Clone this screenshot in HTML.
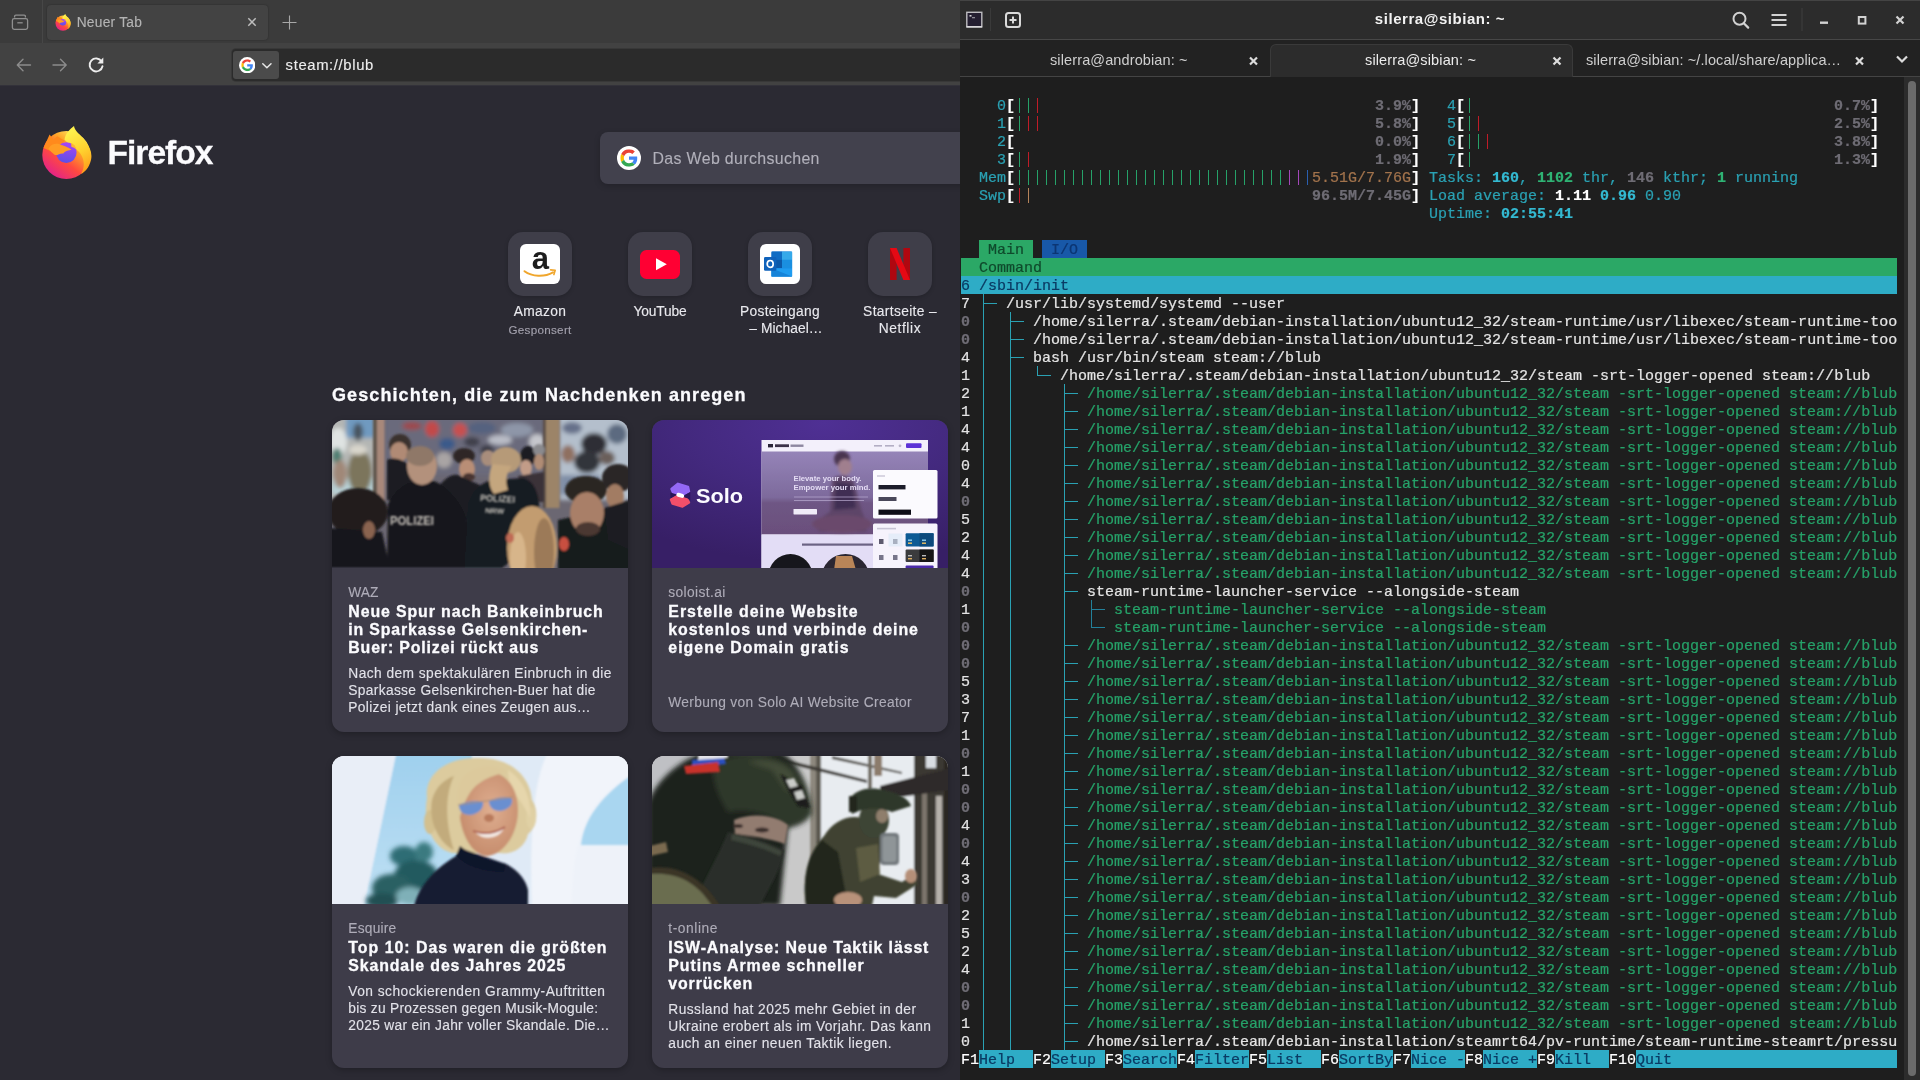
<!DOCTYPE html>
<html lang="de"><head><meta charset="utf-8"><title>screen</title>
<style>
*{box-sizing:border-box}
html,body{margin:0;padding:0}
body{width:1920px;height:1080px;overflow:hidden;position:relative;background:#2b2a33;font-family:"Liberation Sans",sans-serif}
#ff{will-change:transform;position:absolute;left:0;top:0;width:960px;height:1080px;overflow:hidden;background:#2b2a33}
#tm{will-change:transform;position:absolute;left:960px;top:0;width:960px;height:1080px;overflow:hidden;background:#1e1e1e}
#tg{position:absolute;left:-960px;top:0;width:1920px;height:1080px}
.t{position:absolute;font-family:"Liberation Mono",monospace;font-size:15px;line-height:18px;height:18px;white-space:pre;margin-top:2px;-webkit-text-stroke:0.22px}
.r{position:absolute}
.a{position:absolute}
.s{position:absolute;white-space:nowrap;font-family:"Liberation Sans",sans-serif}
</style></head><body>
<div id="ff">
<div class="a" style="left:0;top:0;width:960px;height:44px;background:#3b3b3b"></div>
<div class="a" style="left:0;top:43px;width:960px;height:43px;background:#424242"></div>
<div class="a" style="left:0;top:85px;width:960px;height:1px;background:#33323a"></div>
<div class="a" style="left:42px;top:0;width:1px;height:43px;background:#474747"></div>
<div class="a" style="left:47px;top:5px;width:221px;height:35px;background:#434343;border-radius:4px;box-shadow:0 0 2px rgba(0,0,0,.35)"></div>
<div class="a" style="left:232px;top:49px;width:740px;height:32px;background:#2b2b2b;border-radius:4px;box-shadow:0 0 0 1px #383838"></div>
<div class="a" style="left:233px;top:51px;width:46px;height:28px;background:#4b4b4b;border-radius:3px"></div>
<svg class="a" style="left:0;top:0" width="400" height="86" viewBox="0 0 400 86" fill="none">
<g stroke="#8f8f8f" stroke-width="1.3"><path d="M14.6 17.6v-1.3a1.2 1.2 0 0 1 1.2-1.2h8.4a1.2 1.2 0 0 1 1.2 1.2v1.3"/><rect x="12.4" y="18.6" width="15.2" height="10.8" rx="1.8"/><path d="M17.3 22.8h5.4"/></g>
<g stroke="#8c8c8c" stroke-width="1.4" stroke-linecap="round" stroke-linejoin="round"><path d="M30.5 65H17.5M23 59.3L17.3 65l5.7 5.7"/><path d="M53 65h13M60.5 59.3l5.7 5.7-5.7 5.7"/></g>
<g stroke="#ededed" stroke-width="1.9" stroke-linecap="round"><path d="M101.6 61.4A6.5 6.5 0 1 0 102.5 66.2"/></g><path d="M103.3 57.6v5.9h-5.9z" fill="#ededed"/>
<path d="M248.3 18.3l7.4 7.4M255.7 18.3l-7.4 7.4" stroke="#bdbdbd" stroke-width="1.5"/>
<path d="M289.5 15.5v14M282.5 22.5h14" stroke="#a8a8a8" stroke-width="1.1"/>
<path d="M262.8 63.8l4.1 4 4.1-4" stroke="#e8e8e8" stroke-width="1.5" stroke-linecap="round" stroke-linejoin="round"/>
</svg>
<svg class="a" style="left:55px;top:14px" width="16" height="16.8" viewBox="0 0 51 53.5"><defs>
<linearGradient id="fxA" x1="0.85" y1="0.1" x2="0.2" y2="0.95"><stop offset="0" stop-color="#fff36a"/><stop offset="0.3" stop-color="#ffa428"/><stop offset="0.62" stop-color="#ff4a3f"/><stop offset="1" stop-color="#e2208c"/></linearGradient>
<linearGradient id="fxB" x1="0.4" y1="0" x2="0.7" y2="1"><stop offset="0" stop-color="#fff44f"/><stop offset="0.55" stop-color="#ffd02e"/><stop offset="1" stop-color="#ff9a1a"/></linearGradient>
<linearGradient id="fxC" x1="0.6" y1="0" x2="0.4" y2="1"><stop offset="0" stop-color="#a845f5"/><stop offset="1" stop-color="#5b4fe6"/></linearGradient>
</defs>
<circle cx="25.3" cy="29" r="24" fill="url(#fxA)"/>
<path d="M2.5 22 L8.6 8.4 L12.3 13.4 L16.2 10.2 L24 15 L12 26Z" fill="#ff8a1c"/>
<path d="M23.5 13.5 C24.5 7 29 3 33 0 C33.5 5 39.5 8.5 44 14.5 C49 21 51.5 27 50 34 C48 42 44 46 40 48 C45 40 43 30 36.5 24.5 C33 21 27.5 18.5 23.5 13.5Z" fill="url(#fxB)"/>
<circle cx="25.3" cy="26.6" r="10.3" fill="url(#fxC)"/>
<path d="M7.5 22.5 C11 16.5 17 17.5 20.5 19 C23.5 20 27 21 30.5 23.5 C27.5 24.8 24.5 24.5 22.3 27.6 C19 26.6 15.8 30.6 13.2 28.4 C11 26.6 9 25 7.5 22.5Z" fill="#ff9d24"/>
<path d="M30 17 C33 18 35 21 35.6 24 C34 22 32 21 30.5 21Z" fill="#ffb52e"/></svg>
<svg class="a" style="left:238.8px;top:56.8px" width="16.4" height="16.4" viewBox="0 0 16.4 16.4"><circle cx="8.2" cy="8.2" r="8.2" fill="#fff"/><svg x="2.255" y="2.255" width="11.889999999999999" height="11.889999999999999" viewBox="0 0 48 48"><path fill="#EA4335" d="M24 9.5c3.54 0 6.71 1.22 9.21 3.6l6.85-6.85C35.9 2.38 30.47 0 24 0 14.62 0 6.51 5.38 2.56 13.22l7.98 6.19C12.43 13.72 17.74 9.5 24 9.5z"/><path fill="#4285F4" d="M46.98 24.55c0-1.57-.15-3.09-.38-4.55H24v9.02h12.94c-.58 2.96-2.26 5.48-4.78 7.18l7.73 6c4.51-4.18 7.09-10.36 7.09-17.65z"/><path fill="#FBBC05" d="M10.53 28.59c-.48-1.45-.76-2.99-.76-4.59s.27-3.14.76-4.59l-7.98-6.19C.92 16.46 0 20.12 0 24c0 3.88.92 7.54 2.56 10.78l7.97-6.19z"/><path fill="#34A853" d="M24 48c6.48 0 11.93-2.13 15.89-5.81l-7.73-6c-2.15 1.45-4.92 2.3-8.16 2.3-6.26 0-11.57-4.22-13.47-9.91l-7.98 6.19C6.51 42.62 14.62 48 24 48z"/></svg></svg>
<svg class="a" style="left:40.5px;top:125.5px" width="51" height="53.5" viewBox="0 0 51 53.5"><defs>
<linearGradient id="fyA" x1="0.85" y1="0.1" x2="0.2" y2="0.95"><stop offset="0" stop-color="#fff36a"/><stop offset="0.3" stop-color="#ffa428"/><stop offset="0.62" stop-color="#ff4a3f"/><stop offset="1" stop-color="#e2208c"/></linearGradient>
<linearGradient id="fyB" x1="0.4" y1="0" x2="0.7" y2="1"><stop offset="0" stop-color="#fff44f"/><stop offset="0.55" stop-color="#ffd02e"/><stop offset="1" stop-color="#ff9a1a"/></linearGradient>
<linearGradient id="fyC" x1="0.6" y1="0" x2="0.4" y2="1"><stop offset="0" stop-color="#a845f5"/><stop offset="1" stop-color="#5b4fe6"/></linearGradient>
</defs>
<circle cx="25.3" cy="29" r="24" fill="url(#fyA)"/>
<path d="M2.5 22 L8.6 8.4 L12.3 13.4 L16.2 10.2 L24 15 L12 26Z" fill="#ff8a1c"/>
<path d="M23.5 13.5 C24.5 7 29 3 33 0 C33.5 5 39.5 8.5 44 14.5 C49 21 51.5 27 50 34 C48 42 44 46 40 48 C45 40 43 30 36.5 24.5 C33 21 27.5 18.5 23.5 13.5Z" fill="url(#fyB)"/>
<circle cx="25.3" cy="26.6" r="10.3" fill="url(#fyC)"/>
<path d="M7.5 22.5 C11 16.5 17 17.5 20.5 19 C23.5 20 27 21 30.5 23.5 C27.5 24.8 24.5 24.5 22.3 27.6 C19 26.6 15.8 30.6 13.2 28.4 C11 26.6 9 25 7.5 22.5Z" fill="#ff9d24"/>
<path d="M30 17 C33 18 35 21 35.6 24 C34 22 32 21 30.5 21Z" fill="#ffb52e"/></svg>
<div class="a" style="left:600px;top:132px;width:380px;height:52px;background:#42414d;border-radius:8px;box-shadow:0 2px 6px rgba(0,0,0,.2)"></div>
<svg class="a" style="left:617px;top:146px" width="24" height="24" viewBox="0 0 24 24"><circle cx="12" cy="12" r="12" fill="#fff"/><svg x="3.3000000000000007" y="3.3000000000000007" width="17.4" height="17.4" viewBox="0 0 48 48"><path fill="#EA4335" d="M24 9.5c3.54 0 6.71 1.22 9.21 3.6l6.85-6.85C35.9 2.38 30.47 0 24 0 14.62 0 6.51 5.38 2.56 13.22l7.98 6.19C12.43 13.72 17.74 9.5 24 9.5z"/><path fill="#4285F4" d="M46.98 24.55c0-1.57-.15-3.09-.38-4.55H24v9.02h12.94c-.58 2.96-2.26 5.48-4.78 7.18l7.73 6c4.51-4.18 7.09-10.36 7.09-17.65z"/><path fill="#FBBC05" d="M10.53 28.59c-.48-1.45-.76-2.99-.76-4.59s.27-3.14.76-4.59l-7.98-6.19C.92 16.46 0 20.12 0 24c0 3.88.92 7.54 2.56 10.78l7.97-6.19z"/><path fill="#34A853" d="M24 48c6.48 0 11.93-2.13 15.89-5.81l-7.73-6c-2.15 1.45-4.92 2.3-8.16 2.3-6.26 0-11.57-4.22-13.47-9.91l-7.98 6.19C6.51 42.62 14.62 48 24 48z"/></svg></svg>
<div class="a" style="left:508px;top:232px;width:64px;height:64px;background:#3f3e49;border-radius:15px;box-shadow:0 1px 4px rgba(0,0,0,.2)"></div>
<div class="a" style="left:628px;top:232px;width:64px;height:64px;background:#3f3e49;border-radius:15px;box-shadow:0 1px 4px rgba(0,0,0,.2)"></div>
<div class="a" style="left:748px;top:232px;width:64px;height:64px;background:#3f3e49;border-radius:15px;box-shadow:0 1px 4px rgba(0,0,0,.2)"></div>
<div class="a" style="left:868px;top:232px;width:64px;height:64px;background:#3f3e49;border-radius:15px;box-shadow:0 1px 4px rgba(0,0,0,.2)"></div>
<div class="a" style="left:520px;top:244px;width:40px;height:40px;background:#fff;border-radius:6px"></div>
<svg class="a" style="left:520px;top:244px" width="40" height="40" viewBox="0 0 40 40"><text x="20.3" y="25.2" text-anchor="middle" font-family="Liberation Sans" font-weight="bold" font-size="31" fill="#1d1d1d">a</text>
<path d="M4.5 27.2C12 32.8 24.5 33.2 33 28.3" stroke="#f0a62c" stroke-width="2" fill="none" stroke-linecap="round"/><path d="M30.6 25.9l4.6.4-1.3 4.3" stroke="#f0a62c" stroke-width="1.6" fill="none" stroke-linecap="round" stroke-linejoin="round"/></svg>
<div class="a" style="left:640px;top:250px;width:40px;height:28.5px;background:#ff0033;border-radius:6.5px"></div>
<svg class="a" style="left:640px;top:250px" width="40" height="29" viewBox="0 0 40 29"><path d="M16 8.3v12l10.8-6z" fill="#fff"/></svg>
<div class="a" style="left:760px;top:244px;width:40px;height:40px;background:#fff;border-radius:6px"></div>
<svg class="a" style="left:760px;top:244px" width="40" height="40" viewBox="0 0 40 40">
<rect x="11.5" y="7.6" width="20.6" height="25" rx="1.2" fill="#1373d1"/>
<rect x="22" y="7.6" width="10.1" height="8.3" fill="#35a9ea"/><rect x="11.5" y="7.6" width="10.5" height="8.3" fill="#0f6cc4"/>
<rect x="22" y="15.9" width="10.1" height="8.3" fill="#1a8fe0"/><rect x="11.5" y="15.9" width="10.5" height="8.3" fill="#0c59a9"/>
<rect x="11.5" y="24.2" width="20.6" height="8.4" fill="#1f9cf0"/>
<path d="M11.5 24.2l20.6 8.4H11.5z" fill="#1683d8"/>
<rect x="4" y="13" width="12.4" height="13.8" rx="1.3" fill="#0f62bb"/>
<ellipse cx="10.2" cy="19.9" rx="3" ry="3.4" fill="none" stroke="#fff" stroke-width="1.7"/></svg>
<svg class="a" style="left:890px;top:248px" width="20" height="32" viewBox="0 0 20 32"><rect x="0" y="0" width="6.6" height="32" fill="#b00710"/><rect x="13.4" y="0" width="6.6" height="32" fill="#b00710"/><path d="M0 0h6.6L20 32h-6.6z" fill="#e50914"/></svg>
<div class="a" style="left:332px;top:420px;width:296px;height:312px;background:#3e3c49;border-radius:12px;overflow:hidden;box-shadow:0 2px 6px rgba(0,0,0,.25)"><div style="position:absolute;left:0;top:0;width:296px;height:148px;overflow:hidden"><svg width="296" height="148" viewBox="0 0 296 148" style="display:block"><defs><filter id="b1a" x="-10%" y="-10%" width="120%" height="120%"><feGaussianBlur stdDeviation="2.2"/></filter><filter id="b1b" x="-10%" y="-10%" width="120%" height="120%"><feGaussianBlur stdDeviation="1.1"/></filter></defs>
<rect width="296" height="148" fill="#6b6772"/>
<g filter="url(#b1a)">
<rect x="-5" y="-5" width="52" height="85" fill="#b4b6b4"/>
<rect x="14" y="-4" width="30" height="22" fill="#6f9ac0"/><ellipse cx="26" cy="12" rx="5" ry="9" fill="#4a5560"/>
<ellipse cx="6" cy="22" rx="9" ry="14" fill="#dfe3e2"/><ellipse cx="5" cy="36" rx="5" ry="8" fill="#4f7f72"/>
<rect x="0" y="58" width="44" height="16" fill="#b9d3d8"/>
<ellipse cx="28" cy="52" rx="12" ry="22" fill="#7b745c"/><ellipse cx="8" cy="54" rx="7" ry="14" fill="#a08878"/><ellipse cx="26" cy="30" rx="9" ry="5" fill="#d9d6cc"/>
<rect x="53" y="-5" width="160" height="60" fill="#6a6b7c"/>
<ellipse cx="100" cy="9" rx="7" ry="8" fill="#c24a4a"/><ellipse cx="128" cy="10" rx="7" ry="7" fill="#c85050"/><ellipse cx="80" cy="6" rx="10" ry="4" fill="#9c4a4e"/>
<ellipse cx="150" cy="8" rx="14" ry="6" fill="#55627f"/><ellipse cx="185" cy="10" rx="16" ry="7" fill="#8e96a8"/><ellipse cx="115" cy="24" rx="8" ry="6" fill="#3b5a8a"/>
<ellipse cx="168" cy="20" rx="12" ry="5" fill="#b9bcc6"/><ellipse cx="205" cy="22" rx="8" ry="8" fill="#c5c6cc"/><ellipse cx="140" cy="22" rx="8" ry="5" fill="#41414b"/>
<ellipse cx="112" cy="40" rx="8" ry="8" fill="#a9a4a4"/><ellipse cx="155" cy="30" rx="7" ry="5" fill="#3a3a44"/>
<rect x="227" y="-5" width="75" height="85" fill="#b4bfcc"/>
<ellipse cx="262" cy="24" rx="13" ry="11" fill="#2e2f36"/><ellipse cx="255" cy="42" rx="13" ry="11" fill="#33343b"/><ellipse cx="236" cy="34" rx="7" ry="9" fill="#8f6f60"/>
<ellipse cx="285" cy="14" rx="10" ry="10" fill="#5b6a80"/><ellipse cx="240" cy="8" rx="10" ry="6" fill="#66718a"/><ellipse cx="275" cy="38" rx="8" ry="7" fill="#6a5e5a"/>
<rect x="228" y="55" width="40" height="20" fill="#7f8ea6"/>
</g>
<g filter="url(#b1b)">
<rect x="44.5" y="-2" width="8" height="84" fill="#a8887a"/><rect x="41" y="-2" width="4" height="84" fill="#5e564e"/>
<rect x="213" y="-2" width="14.5" height="90" fill="#9c8468"/><rect x="211" y="-2" width="3" height="90" fill="#5c5048"/>
<!-- officer far left behind -->
<ellipse cx="68" cy="25" rx="11" ry="11" fill="#3b332f"/><ellipse cx="67" cy="32" rx="9" ry="10" fill="#b08a74"/>
<path d="M55 40 C62 36 76 40 82 52 L82 80 L55 80Z" fill="#1d1e24"/>
<!-- man glasses -->
<ellipse cx="132" cy="36" rx="11" ry="8" fill="#2e2827"/><ellipse cx="135" cy="49" rx="8" ry="10" fill="#b98e76"/><ellipse cx="137" cy="57" rx="6" ry="4" fill="#4a3630"/>
<path d="M104 70 C112 58 122 52 128 56 L150 66 L150 100 L104 100Z" fill="#1c1d23"/>
<!-- woman black hat + grey hat man -->
<ellipse cx="196" cy="36" rx="8" ry="10" fill="#1f1f24"/><ellipse cx="194" cy="48" rx="6" ry="8" fill="#c29c88"/>
<ellipse cx="207" cy="30" rx="6" ry="6" fill="#8a8a8e"/><ellipse cx="207" cy="42" rx="5" ry="8" fill="#b08c74"/>
<path d="M186 56 L212 52 L212 82 L190 82Z" fill="#3a3038"/>
<ellipse cx="156" cy="38" rx="7" ry="8" fill="#a88d7c"/>
<!-- center officer -->
<path d="M55 148 L56 84 C62 70 74 62 84 61 L102 61 C114 66 124 76 132 92 L150 148Z" fill="#17181d"/>
<ellipse cx="90" cy="46" rx="15" ry="19" fill="#b3917c"/><ellipse cx="88" cy="36" rx="14" ry="10" fill="#8f7868"/>
<!-- female officer -->
<path d="M132 148 L136 84 C140 70 150 62 160 60 L192 58 C202 62 206 72 207 84 L208 120 L170 148Z" fill="#191a20"/>
<ellipse cx="174" cy="40" rx="15" ry="13" fill="#b69a78"/><path d="M160 44 C156 56 156 66 162 74 L176 70 C172 60 176 50 180 46Z" fill="#c4a67e"/>
<!-- left person -->
<ellipse cx="26" cy="92" rx="30" ry="24" fill="#201d1f"/><path d="M-2 108 L50 112 L58 148 L-2 148Z" fill="#17171b"/><ellipse cx="37" cy="110" rx="6" ry="9" fill="#8a6450"/>
<!-- right man -->
<path d="M226 100 L298 84 L298 150 L226 150Z" fill="#191a1f"/>
<ellipse cx="254" cy="70" rx="21" ry="14" fill="#2a2523"/><ellipse cx="255" cy="93" rx="17" ry="21" fill="#a97f68"/><ellipse cx="256" cy="109" rx="12" ry="7" fill="#4b3831"/>
<ellipse cx="286" cy="58" rx="16" ry="14" fill="#2c2726"/><ellipse cx="283" cy="76" rx="9" ry="12" fill="#a27b64"/><path d="M272 88 L298 80 L298 130 L276 120Z" fill="#1b1c21"/>
<!-- foreground blonde -->
<ellipse cx="200" cy="128" rx="25" ry="42" fill="#c29c70"/><ellipse cx="212" cy="132" rx="10" ry="34" fill="#9c7a58"/><ellipse cx="186" cy="138" rx="8" ry="26" fill="#d7b58a"/>
<ellipse cx="232" cy="124" rx="5" ry="7" fill="#c8503f"/><ellipse cx="178" cy="118" rx="4" ry="5" fill="#c06a55"/>
</g>
<g font-family="Liberation Sans" font-weight="bold" fill="#d6d0c8" filter="url(#b1b)" opacity=".95">
<text x="58" y="105" font-size="12.5" textLength="44" lengthAdjust="spacingAndGlyphs">POLIZEI</text>
<text x="148" y="81" font-size="9.5" textLength="35" lengthAdjust="spacingAndGlyphs" transform="rotate(3 148 81)">POLIZEI</text>
<text x="153" y="93" font-size="7.5" textLength="19" lengthAdjust="spacingAndGlyphs" transform="rotate(3 153 93)">NRW</text>
</g>
</svg>
</div></div>
<div class="a" style="left:652px;top:420px;width:296px;height:312px;background:#3e3c49;border-radius:12px;overflow:hidden;box-shadow:0 2px 6px rgba(0,0,0,.25)"><div style="position:absolute;left:0;top:0;width:296px;height:148px;overflow:hidden"><svg width="296" height="148" viewBox="0 0 296 148" style="display:block"><defs>
<radialGradient id="s2g" cx="0.58" cy="0.02" r="0.95"><stop offset="0" stop-color="#4f3094"/><stop offset="0.5" stop-color="#43297e"/><stop offset="1" stop-color="#371f66"/></radialGradient>
<linearGradient id="s2h" x1="0" y1="0" x2="0" y2="1"><stop offset="0" stop-color="#9584b8"/><stop offset="0.55" stop-color="#7d6a9c"/><stop offset="0.62" stop-color="#6e5684"/><stop offset="1" stop-color="#6b4f7c"/></linearGradient>
<filter id="b2a" x="-10%" y="-10%" width="120%" height="120%"><feGaussianBlur stdDeviation="0.7"/></filter><filter id="b2b" x="-20%" y="-20%" width="140%" height="140%"><feGaussianBlur stdDeviation="1.6"/></filter></defs>
<rect width="296" height="148" fill="url(#s2g)"/>
<g filter="url(#b2a)">
<rect x="109.5" y="20" width="166.5" height="130" fill="#f3f0fb"/>
<rect x="109.5" y="31.5" width="166.5" height="83" fill="url(#s2h)"/>
<rect x="109.5" y="114.5" width="166.5" height="36" fill="#e3ddf6"/>
<rect x="116" y="24" width="5" height="3.4" fill="#2b2538"/><rect x="123" y="24.3" width="14" height="2.8" fill="#3a3348"/><rect x="138.5" y="24.5" width="13" height="2.4" fill="#8d87a0"/>
<rect x="222" y="25" width="8" height="1.6" fill="#b3aec4"/><rect x="233" y="25" width="9" height="1.6" fill="#b3aec4"/><circle cx="248" cy="25.8" r="1.4" fill="#b9b4c8"/>
<rect x="254" y="23.2" width="15.5" height="4.8" rx="1" fill="#5b32d6"/>
</g>
<g filter="url(#b2b)">
<ellipse cx="190" cy="39" rx="8" ry="8" fill="#4a3550"/><ellipse cx="193" cy="47" rx="7" ry="8" fill="#a07f8e"/>
<path d="M180 60 C184 54 198 54 202 62 L210 92 C214 100 216 106 214 112 L168 112 C160 106 170 96 178 92Z" fill="#5d4568"/>
<path d="M184 62 L200 64 L204 88 L182 90Z" fill="#3f2f52"/>
<ellipse cx="190" cy="104" rx="30" ry="9" fill="#6a4a6c"/>
</g>
<g filter="url(#b2a)">
<text x="141.5" y="60.5" font-family="Liberation Sans" font-weight="bold" font-size="7.6" fill="#e4dcf4" textLength="68" lengthAdjust="spacingAndGlyphs">Elevate your body.</text>
<text x="141.5" y="70.3" font-family="Liberation Sans" font-weight="bold" font-size="7.6" fill="#e4dcf4" textLength="77" lengthAdjust="spacingAndGlyphs">Empower your mind.</text>
<rect x="142" y="76.5" width="74" height="1" fill="#b9a9d0" opacity=".7"/><rect x="142" y="80" width="70" height="1" fill="#b9a9d0" opacity=".7"/>
<rect x="141.5" y="89" width="23.5" height="5.4" rx=".6" fill="#f0ecf8"/>
<rect x="150" y="123.5" width="72" height="2.2" fill="#4d4468" opacity=".8"/>
<circle cx="138.5" cy="156" r="22" fill="#17161b"/><circle cx="193.5" cy="158" r="24" fill="#2a2530"/><path d="M184 136 L200 136 L204 150 L182 150Z" fill="#b98558"/>
<rect x="221" y="50" width="64.5" height="48.5" rx="1.5" fill="#fbfafe"/>
<rect x="221" y="103.5" width="64.5" height="48" rx="1.5" fill="#f6f3fc"/>
<rect x="225" y="55.3" width="8" height="1.4" fill="#c9c5d6"/>
<rect x="226.5" y="65" width="27" height="4.4" fill="#1f1b2a"/><rect x="226.5" y="77" width="18" height="4" fill="#4a465a"/><rect x="226.5" y="89.6" width="32.5" height="5.2" fill="#0d0b14"/>
<rect x="225" y="107.8" width="19" height="1.6" fill="#c9c5d6"/>
<rect x="227" y="119" width="4.5" height="5" fill="#5d5a6e"/><rect x="241" y="119" width="4.5" height="5" fill="#5d5a6e"/><rect x="236.500" y="113.500" width="14" height="13" fill="#dbe9f7" opacity=".6"/>
<rect x="227" y="135" width="4.500" height="5" fill="#77748a"/><rect x="241" y="135" width="4.500" height="5" fill="#77748a"/>
<rect x="253.600" y="113.200" width="28" height="13.200" rx="1" fill="#0f5a94"/><rect x="267.500" y="113.200" width="14.100" height="13.200" fill="#0b4a7c"/>
<rect x="253.600" y="129.600" width="28" height="12.400" rx="1" fill="#3b3b3d"/><rect x="267.500" y="129.600" width="14.100" height="12.400" fill="#151517"/>
<rect x="253.600" y="145.600" width="28" height="6" rx="1" fill="#4a2aa8"/>
<rect x="256" y="119.500" width="4" height="1.400" fill="#8fd0f0"/><rect x="256" y="122.500" width="4" height="1.400" fill="#f0c060"/><rect x="270" y="119.500" width="4" height="1.400" fill="#8fd0f0"/><rect x="270" y="122.500" width="4" height="1.400" fill="#f0c060"/>
<rect x="256" y="135" width="4" height="1.400" fill="#bbb"/><rect x="256" y="138" width="4" height="1.400" fill="#e0b060"/><rect x="270" y="135" width="4" height="1.400" fill="#bbb"/><rect x="270" y="138" width="4" height="1.400" fill="#e0b060"/>
</g>
<!-- Solo logo -->
<g filter="url(#b2a)">
<path d="M19.5 69 L26 63.8 L36 66.8 L37 71.5 L30.5 75 L21 72.5Z" fill="#9468f6" stroke="#9468f6" stroke-width="2.4" stroke-linejoin="round"/>
<path d="M19 79.5 L25 76 L35.5 79.5 L37 82.5 L30.5 86.5 L20.5 83.5Z" fill="#f2506a" stroke="#f2506a" stroke-width="2.4" stroke-linejoin="round"/>
<path d="M18.3 72.5 L30.5 76.2 L38.2 72 L38.2 80.5 L35.5 78.3 L25 74.8 L18.3 78.5Z" fill="#2a1759"/>
<rect x="24.3" y="73.300" width="8" height="4" rx="2" fill="#fff" transform="rotate(17 28.3 75.3)"/>
<text x="44" y="82.600" font-family="Liberation Sans" font-weight="bold" font-size="21" fill="#fbfaff" textLength="47" lengthAdjust="spacingAndGlyphs">Solo</text>
</g>
</svg>
</div></div>
<div class="a" style="left:332px;top:756px;width:296px;height:312px;background:#3e3c49;border-radius:12px;overflow:hidden;box-shadow:0 2px 6px rgba(0,0,0,.25)"><div style="position:absolute;left:0;top:0;width:296px;height:148px;overflow:hidden"><svg width="296" height="148" viewBox="0 0 296 148" style="display:block"><defs>
<filter id="b3a" x="-10%" y="-10%" width="120%" height="120%"><feGaussianBlur stdDeviation="1.2"/></filter><filter id="b3b" x="-20%" y="-20%" width="140%" height="140%"><feGaussianBlur stdDeviation="2.4"/></filter>
<linearGradient id="s3k" x1="0" y1="0" x2="0" y2="1"><stop offset="0" stop-color="#9fd0ee"/><stop offset="1" stop-color="#bfe0f4"/></linearGradient>
<radialGradient id="s3f" cx="0.55" cy="0.45" r="0.6"><stop offset="0" stop-color="#dfae90"/><stop offset="1" stop-color="#c48a6a"/></radialGradient></defs>
<rect width="296" height="148" fill="#eef2f9"/>
<g filter="url(#b3a)">
<path d="M64 -2 L140 -2 L140 150 L32 150Z" fill="url(#s3k)"/>
<path d="M-2 -2 L64 -2 L32 150 L-2 150Z" fill="#e9eef7"/>
<path d="M140 -2 L215 -2 C200 30 198 80 200 150 L140 150Z" fill="#dfeaf6"/>
<path d="M298 20 C270 40 252 62 249 89 L298 89Z" fill="#a9d6f0"/>
<path d="M215 -2 L298 -2 L298 20 C262 40 240 70 240 150 L200 150 C198 80 202 30 215 -2Z" fill="#f1f4fa"/>
</g>
<g filter="url(#b3b)">
<ellipse cx="72" cy="100" rx="14" ry="10" fill="#2f6d74"/><ellipse cx="84" cy="120" rx="22" ry="16" fill="#245a5f"/><ellipse cx="60" cy="132" rx="20" ry="14" fill="#2a6064"/><ellipse cx="92" cy="96" rx="9" ry="10" fill="#3b7a80"/><ellipse cx="50" cy="145" rx="16" ry="8" fill="#214f53"/><ellipse cx="78" cy="140" rx="14" ry="9" fill="#7fb0b8"/>
</g>
<g filter="url(#b3a)">
<!-- hair -->
<path d="M95 42 C92 16 118 1 146 2 C178 1 198 20 200 44 C208 56 204 72 196 78 C193 92 180 99 168 97 L120 97 C102 93 90 70 95 42Z" fill="#dccb9e"/><ellipse cx="98" cy="66" rx="6" ry="12" fill="#d3c08f"/><ellipse cx="199" cy="62" rx="5" ry="11" fill="#e0d0a4"/>
<path d="M100 44 C104 30 112 24 122 20 C112 40 114 70 122 94 C108 88 96 66 100 44Z" fill="#c2ab7c"/>
<path d="M176 14 C192 24 200 44 198 62 C192 50 186 40 178 34Z" fill="#e6d6ac"/>
<!-- body -->
<path d="M82 150 C88 128 104 112 124 100 L128 92 L174 108 C186 114 194 124 196 134 L196 150Z" fill="#171d33"/>
<path d="M124 100 L128 90 C140 100 160 106 174 108 L172 116 C150 116 134 110 124 100Z" fill="#10152a"/>
<!-- face -->
<path d="M127 52 C126 30 140 16 156 16 C174 16 186 32 186 54 C186 78 172 98 156 100 C140 100 128 78 127 52Z" fill="url(#s3f)"/>
<path d="M132 20 C144 8 164 8 176 16 C166 18 150 22 140 34 C134 42 130 52 128 62 C124 48 124 30 132 20Z" fill="#dcc99c"/>
<!-- glasses -->
<path d="M127 49 C134 45 146 44 151 46 C152 53 146 58 138 59 C131 59 127 55 127 49Z" fill="#6a8fd0"/>
<path d="M157 45 C164 41 176 40 180 43 C181 50 175 54 168 55 C161 55 157 51 157 45Z" fill="#6a8fd0"/>
<path d="M126 49 L181 41" stroke="#a88f74" stroke-width="1.2"/>
<ellipse cx="157" cy="62" rx="5" ry="4" fill="#b97a5c"/>
<path d="M143 76 C152 80 164 78 172 72 C168 82 152 86 143 76Z" fill="#f3e9e4"/><path d="M141 75 C152 79 164 77 173 71" stroke="#a8564a" stroke-width="1.6" fill="none"/>
</g>
</svg>
</div></div>
<div class="a" style="left:652px;top:756px;width:296px;height:312px;background:#3e3c49;border-radius:12px;overflow:hidden;box-shadow:0 2px 6px rgba(0,0,0,.25)"><div style="position:absolute;left:0;top:0;width:296px;height:148px;overflow:hidden"><svg width="296" height="148" viewBox="0 0 296 148" style="display:block"><defs>
<filter id="b4a" x="-10%" y="-10%" width="120%" height="120%"><feGaussianBlur stdDeviation="1.3"/></filter><filter id="b4b" x="-20%" y="-20%" width="140%" height="140%"><feGaussianBlur stdDeviation="2.6"/></filter></defs>
<rect width="296" height="148" fill="#cfd0d2"/>
<g filter="url(#b4a)">
<rect x="168" y="-2" width="100" height="152" fill="#e8ecf0"/>
<rect x="156" y="-2" width="13" height="152" fill="#8d887e"/><rect x="164" y="-2" width="5" height="90" fill="#5c5850"/>
<rect x="120" y="-2" width="38" height="152" fill="#c9c9c9"/>
<rect x="-2" y="-2" width="40" height="50" fill="#bfc0c4"/>
<path d="M120 0 L215 24 L215 27 L120 4Z" fill="#3c3a36"/>
<path d="M180 0 L250 16 L250 18 L180 3Z" fill="#4a4640"/>
<rect x="216" y="-2" width="4" height="36" fill="#6f6a60"/><rect x="222" y="-2" width="8" height="22" fill="#8c7c6c"/>
<!-- right frame -->
<rect x="262" y="-2" width="36" height="152" fill="#3b3733"/>
<rect x="270" y="30" width="5" height="120" fill="#7b746c"/><rect x="284" y="40" width="6" height="110" fill="#b5b0aa"/><rect x="292" y="-2" width="6" height="152" fill="#2a2724"/>
<path d="M228 30 L298 12 L298 34 L228 44Z" fill="#2f2c29"/>
<rect x="274" y="-2" width="10" height="14" fill="#d9dde2"/>
</g>
<g filter="url(#b4a)">
<!-- right soldier -->
<path d="M154 150 C150 120 156 96 172 80 C180 66 196 58 210 62 L226 72 C232 90 228 104 226 118 L250 126 L262 118 L266 128 L244 142 L222 140 L220 150Z" fill="#3f4231"/>
<path d="M154 150 C150 120 156 100 170 84 L186 96 L196 150Z" fill="#23251e"/>
<path d="M204 92 L226 88 L228 118 L208 126Z" fill="#5d5c42"/>
<ellipse cx="222" cy="64" rx="15" ry="18" fill="#3d4435"/><ellipse cx="230" cy="60" rx="6" ry="7" fill="#8f7e6c"/>
<path d="M197 46 C200 34 216 30 232 34 C246 36 258 44 259 50 L240 56 C226 50 210 52 200 58Z" fill="#2f3829"/>
<rect x="197" y="40" width="8" height="16" fill="#24261f"/>
<rect x="228" y="77" width="19" height="32" rx="4" fill="#70767a"/><rect x="230.500" y="80" width="14" height="26" rx="3" fill="#8f9598"/>
<ellipse cx="259" cy="120" rx="6" ry="7" fill="#b58f78"/>
<ellipse cx="196" cy="144" rx="14" ry="8" fill="#b8927a"/>
</g>
<g filter="url(#b4b)">
<!-- left soldier -->
<path d="M-4 46 C4 26 22 8 50 -4 L130 -4 C150 10 160 40 160 56 C156 66 146 70 136 72 L128 150 L-4 150Z" fill="#1f231e"/>
<path d="M62 10 C80 -6 124 -6 142 14 C156 30 160 46 160 58 C150 68 140 70 132 70 C120 58 96 52 76 56 C66 40 60 24 62 10Z" fill="#2f3729"/>
<path d="M96 6 C110 2 130 4 140 16 L150 40 L134 34 L120 14Z" fill="#434c39"/>
</g>
<g filter="url(#b4a)">
<path d="M82 64 C98 57 122 58 136 69 L133 88 C120 83 100 80 83 78Z" fill="#927b70"/>
<ellipse cx="110" cy="74" rx="7" ry="2.600" fill="#3a2e2c"/><ellipse cx="86" cy="70" rx="5" ry="2" fill="#3a2e2c"/>
<path d="M76 76 C96 80 118 86 132 94 C130 112 118 130 108 150 L40 150 C50 130 66 100 76 76Z" fill="#2a2f29"/>
<path d="M80 78 C98 82 116 88 130 95 L128 100 C112 92 96 88 79 84Z" fill="#3d443a"/>
<path d="M-2 116 C20 112 44 122 62 150 L-2 150Z" fill="#6b6d50"/><path d="M-2 112 C24 108 50 120 68 150 L60 150 C44 124 22 116 -2 118Z" fill="#3a3427"/>
<path d="M-2 90 L14 86 L16 96 L-2 100Z" fill="#7a6a50"/>
<path d="M128 18 L150 30 L158 52 L146 50 L136 34Z" fill="#1c1f1a"/><path d="M134 24 L142 22 L146 30 L138 32Z M142 36 L150 34 L153 42 L145 44Z" fill="#c9cbc8"/>
<!-- flag -->
<path d="M40 4 L72 0 L74 8 L40 12Z" fill="#2a4fc0"/><path d="M32 10 L66 6 L68 16 L34 18Z" fill="#c8302c"/><path d="M46 -2 L76 -2 L76 2 L46 4Z" fill="#e6e6ea"/>
</g>
</svg>
</div></div>
<div class="s" style="left:76.7px;top:13.5px;font-size:13.78px;line-height:18px;color:#b4b4b4;letter-spacing:0.24px;-webkit-text-stroke:0.12px;">Neuer Tab</div>
<div class="s" style="left:285.6px;top:55.9px;font-size:14.84px;line-height:19px;color:#eeeeee;letter-spacing:0.63px;-webkit-text-stroke:0.12px;">steam://blub</div>
<div class="s" style="left:107.5px;top:131.3px;font-size:33.6px;line-height:44px;color:#fbfbfe;letter-spacing:-0.99px;font-weight:bold;-webkit-text-stroke:0.3px;">Firefox</div>
<div class="s" style="left:652.5px;top:147.5px;font-size:15.9px;line-height:21px;color:#b1b0ba;letter-spacing:0.36px;-webkit-text-stroke:0.12px;">Das Web durchsuchen</div>
<div class="s" style="left:513.7px;top:303.4px;font-size:13.78px;line-height:18px;color:#e9e9ee;letter-spacing:0.34px;-webkit-text-stroke:0.12px;">Amazon</div>
<div class="s" style="left:508.5px;top:322.3px;font-size:11.66px;line-height:15px;color:#a3a1ad;letter-spacing:0.28px;-webkit-text-stroke:0.12px;">Gesponsert</div>
<div class="s" style="left:633.6px;top:303.4px;font-size:13.78px;line-height:18px;color:#e9e9ee;letter-spacing:-0.17px;-webkit-text-stroke:0.12px;">YouTube</div>
<div class="s" style="left:740.1px;top:303.4px;font-size:13.78px;line-height:18px;color:#e9e9ee;letter-spacing:0.29px;-webkit-text-stroke:0.12px;">Posteingang</div>
<div class="s" style="left:749.3px;top:320.0px;font-size:13.78px;line-height:18px;color:#e9e9ee;letter-spacing:0.07px;-webkit-text-stroke:0.12px;">– Michael…</div>
<div class="s" style="left:863.1px;top:303.4px;font-size:13.78px;line-height:18px;color:#e9e9ee;letter-spacing:0.35px;-webkit-text-stroke:0.12px;">Startseite –</div>
<div class="s" style="left:878.8px;top:320.0px;font-size:13.78px;line-height:18px;color:#e9e9ee;letter-spacing:0.58px;-webkit-text-stroke:0.12px;">Netflix</div>
<div class="s" style="left:332.0px;top:383.9px;font-size:18.02px;line-height:23px;color:#fbfbfe;letter-spacing:1.08px;font-weight:bold;-webkit-text-stroke:0.3px;">Geschichten, die zum Nachdenken anregen</div>
<div class="s" style="left:348.3px;top:584.0px;font-size:13.78px;line-height:18px;color:#aeacb8;letter-spacing:-0.04px;-webkit-text-stroke:0.12px;">WAZ</div>
<div class="s" style="left:348.3px;top:601.1px;font-size:15.9px;line-height:21px;color:#fbfbfe;letter-spacing:0.89px;font-weight:bold;-webkit-text-stroke:0.3px;">Neue Spur nach Bankeinbruch</div>
<div class="s" style="left:348.3px;top:619.1px;font-size:15.9px;line-height:21px;color:#fbfbfe;letter-spacing:0.84px;font-weight:bold;-webkit-text-stroke:0.3px;">in Sparkasse Gelsenkirchen-</div>
<div class="s" style="left:348.3px;top:637.1px;font-size:15.9px;line-height:21px;color:#fbfbfe;letter-spacing:0.85px;font-weight:bold;-webkit-text-stroke:0.3px;">Buer: Polizei rückt aus</div>
<div class="s" style="left:348.3px;top:664.9px;font-size:13.78px;line-height:18px;color:#e2e2e9;letter-spacing:0.43px;-webkit-text-stroke:0.12px;">Nach dem spektakulären Einbruch in die</div>
<div class="s" style="left:348.3px;top:682.0px;font-size:13.78px;line-height:18px;color:#e2e2e9;letter-spacing:0.33px;-webkit-text-stroke:0.12px;">Sparkasse Gelsenkirchen-Buer hat die</div>
<div class="s" style="left:348.3px;top:699.1px;font-size:13.78px;line-height:18px;color:#e2e2e9;letter-spacing:0.34px;-webkit-text-stroke:0.12px;">Polizei jetzt dank eines Zeugen aus…</div>
<div class="s" style="left:668.3px;top:584.0px;font-size:13.78px;line-height:18px;color:#aeacb8;letter-spacing:0.39px;-webkit-text-stroke:0.12px;">soloist.ai</div>
<div class="s" style="left:668.3px;top:601.1px;font-size:15.9px;line-height:21px;color:#fbfbfe;letter-spacing:0.99px;font-weight:bold;-webkit-text-stroke:0.3px;">Erstelle deine Website</div>
<div class="s" style="left:668.3px;top:619.1px;font-size:15.9px;line-height:21px;color:#fbfbfe;letter-spacing:0.94px;font-weight:bold;-webkit-text-stroke:0.3px;">kostenlos und verbinde deine</div>
<div class="s" style="left:668.3px;top:637.1px;font-size:15.9px;line-height:21px;color:#fbfbfe;letter-spacing:1.03px;font-weight:bold;-webkit-text-stroke:0.3px;">eigene Domain gratis</div>
<div class="s" style="left:668.3px;top:694.0px;font-size:13.78px;line-height:18px;color:#aeacb8;letter-spacing:0.33px;-webkit-text-stroke:0.12px;">Werbung von Solo AI Website Creator</div>
<div class="s" style="left:348.3px;top:920.0px;font-size:13.78px;line-height:18px;color:#aeacb8;letter-spacing:0.21px;-webkit-text-stroke:0.12px;">Esquire</div>
<div class="s" style="left:348.3px;top:937.1px;font-size:15.9px;line-height:21px;color:#fbfbfe;letter-spacing:1.00px;font-weight:bold;-webkit-text-stroke:0.3px;">Top 10: Das waren die größten</div>
<div class="s" style="left:348.3px;top:955.1px;font-size:15.9px;line-height:21px;color:#fbfbfe;letter-spacing:0.87px;font-weight:bold;-webkit-text-stroke:0.3px;">Skandale des Jahres 2025</div>
<div class="s" style="left:348.3px;top:982.9px;font-size:13.78px;line-height:18px;color:#e2e2e9;letter-spacing:0.47px;-webkit-text-stroke:0.12px;">Von schockierenden Grammy-Auftritten</div>
<div class="s" style="left:348.3px;top:1000.0px;font-size:13.78px;line-height:18px;color:#e2e2e9;letter-spacing:0.27px;-webkit-text-stroke:0.12px;">bis zu Prozessen gegen Musik-Mogule:</div>
<div class="s" style="left:348.3px;top:1017.1px;font-size:13.78px;line-height:18px;color:#e2e2e9;letter-spacing:0.31px;-webkit-text-stroke:0.12px;">2025 war ein Jahr voller Skandale. Die…</div>
<div class="s" style="left:668.3px;top:920.0px;font-size:13.78px;line-height:18px;color:#aeacb8;letter-spacing:0.57px;-webkit-text-stroke:0.12px;">t-online</div>
<div class="s" style="left:668.3px;top:937.1px;font-size:15.9px;line-height:21px;color:#fbfbfe;letter-spacing:0.89px;font-weight:bold;-webkit-text-stroke:0.3px;">ISW-Analyse: Neue Taktik lässt</div>
<div class="s" style="left:668.3px;top:955.1px;font-size:15.9px;line-height:21px;color:#fbfbfe;letter-spacing:0.92px;font-weight:bold;-webkit-text-stroke:0.3px;">Putins Armee schneller</div>
<div class="s" style="left:668.3px;top:973.1px;font-size:15.9px;line-height:21px;color:#fbfbfe;letter-spacing:0.89px;font-weight:bold;-webkit-text-stroke:0.3px;">vorrücken</div>
<div class="s" style="left:668.3px;top:1000.9px;font-size:13.78px;line-height:18px;color:#e2e2e9;letter-spacing:0.43px;-webkit-text-stroke:0.12px;">Russland hat 2025 mehr Gebiet in der</div>
<div class="s" style="left:668.3px;top:1018.0px;font-size:13.78px;line-height:18px;color:#e2e2e9;letter-spacing:0.40px;-webkit-text-stroke:0.12px;">Ukraine erobert als im Vorjahr. Das kann</div>
<div class="s" style="left:668.3px;top:1035.1px;font-size:13.78px;line-height:18px;color:#e2e2e9;letter-spacing:0.44px;-webkit-text-stroke:0.12px;">auch an einer neuen Taktik liegen.</div>
</div>
<div id="tm">
<div class="a" style="left:0;top:0;width:960px;height:40px;background:#2c2c2c"></div>
<div class="a" style="left:0;top:0;width:960px;height:1px;background:#444444"></div>
<div class="a" style="left:0;top:39px;width:960px;height:1px;background:#474747"></div>
<div class="a" style="left:0;top:40px;width:960px;height:36px;background:#222222"></div>
<div class="a" style="left:0;top:76px;width:960px;height:1px;background:#444444"></div>
<div class="a" style="left:310px;top:44px;width:303px;height:33px;background:#2c2c2c;border:1px solid #3a3a3a;border-bottom:none;border-radius:6px 6px 0 0"></div>
<!-- scrollbar -->
<div class="a" style="left:944px;top:77px;width:16px;height:1003px;background:#2c2c2c"></div>
<div class="a" style="left:948px;top:81px;width:8px;height:995px;background:#6b6b6b;border-radius:4px"></div>
<!-- header icons -->
<svg class="a" style="left:0;top:0" width="960" height="78" viewBox="0 0 960 78">
 <rect x="6.8" y="12.3" width="15" height="14.5" fill="#241f31" stroke="#bdbcc0" stroke-width="1.4"/>
 <rect x="6.5" y="26" width="15.6" height="1.6" fill="#d8d7da"/>
 <rect x="9.5" y="15" width="2" height="1.6" fill="#cfcfd3"/><rect x="12" y="17" width="3" height="1.3" fill="#8c8a94"/>
 <rect x="30" y="8" width="1" height="23" fill="#3a3a3a"/>
 <rect x="46" y="13" width="14" height="14" rx="2.5" fill="none" stroke="#dadada" stroke-width="2"/>
 <path d="M53 16.5v7M49.5 20h7" stroke="#dadada" stroke-width="2" fill="none"/>
 <circle cx="779.5" cy="18.8" r="6" fill="none" stroke="#d2d2d2" stroke-width="2"/>
 <path d="M783.8 23.2l4.4 4.4" stroke="#d2d2d2" stroke-width="2.2" stroke-linecap="round"/>
 <path d="M811.5 15h15M811.5 20h15M811.5 25h15" stroke="#d2d2d2" stroke-width="2"/>
 <rect x="841.5" y="8" width="1" height="23" fill="#3f3f3f"/>
 <rect x="860" y="21.5" width="8" height="2.4" fill="#d2d2d2"/>
 <rect x="898.8" y="17" width="6.6" height="6.6" fill="none" stroke="#d2d2d2" stroke-width="2"/>
 <path d="M936.5 16.5l7 7M943.5 16.5l-7 7" stroke="#d2d2d2" stroke-width="2.2"/>
 <path d="M290 57.500l7 7M297 57.500l-7 7" stroke="#dcdcdc" stroke-width="2.2"/>
 <path d="M593.500 57.500l7 7M600.500 57.500l-7 7" stroke="#dcdcdc" stroke-width="2.2"/>
 <path d="M896 57.500l7 7M903 57.500l-7 7" stroke="#dcdcdc" stroke-width="2.2"/>
 <path d="M937 56.5l5 5 5-5" stroke="#dcdcdc" stroke-width="2.2" fill="none"/>
</svg>
<div class="s" style="left:0;width:960px;text-align:center;top:10px;font-size:15px;line-height:18px;font-weight:bold;color:#f2f2f2;letter-spacing:0.55px">silerra@sibian: ~</div>
<div class="s" style="left:90px;top:51px;font-size:14.5px;line-height:18px;color:#cfcfcf;letter-spacing:0.12px">silerra@androbian: ~</div>
<div class="s" style="left:405px;top:51px;font-size:14.5px;line-height:18px;color:#ececec;letter-spacing:0.14px">silerra@sibian: ~</div>
<div class="s" style="left:626px;top:51px;font-size:14.5px;line-height:18px;color:#cfcfcf;letter-spacing:0.1px">silerra@sibian: ~/.local/share/applica…</div>

<div id="tg">
<div class="r" style="left:1019px;top:98px;width:1px;height:15px;background:#26a269"></div>
<div class="r" style="left:1028px;top:98px;width:1px;height:15px;background:#26a269"></div>
<div class="r" style="left:1037px;top:98px;width:1px;height:15px;background:#c01c28"></div>
<div class="r" style="left:1019px;top:116px;width:1px;height:15px;background:#26a269"></div>
<div class="r" style="left:1028px;top:116px;width:1px;height:15px;background:#c01c28"></div>
<div class="r" style="left:1037px;top:116px;width:1px;height:15px;background:#c01c28"></div>
<div class="r" style="left:1019px;top:152px;width:1px;height:15px;background:#26a269"></div>
<div class="r" style="left:1028px;top:152px;width:1px;height:15px;background:#c01c28"></div>
<div class="r" style="left:1469px;top:98px;width:1px;height:15px;background:#26a269"></div>
<div class="r" style="left:1469px;top:116px;width:1px;height:15px;background:#26a269"></div>
<div class="r" style="left:1478px;top:116px;width:1px;height:15px;background:#c01c28"></div>
<div class="r" style="left:1469px;top:134px;width:1px;height:15px;background:#26a269"></div>
<div class="r" style="left:1478px;top:134px;width:1px;height:15px;background:#26a269"></div>
<div class="r" style="left:1487px;top:134px;width:1px;height:15px;background:#c01c28"></div>
<div class="r" style="left:1469px;top:152px;width:1px;height:15px;background:#26a269"></div>
<div class="r" style="left:1019px;top:170px;width:1px;height:15px;background:#26a269"></div>
<div class="r" style="left:1028px;top:170px;width:1px;height:15px;background:#26a269"></div>
<div class="r" style="left:1037px;top:170px;width:1px;height:15px;background:#26a269"></div>
<div class="r" style="left:1046px;top:170px;width:1px;height:15px;background:#26a269"></div>
<div class="r" style="left:1055px;top:170px;width:1px;height:15px;background:#26a269"></div>
<div class="r" style="left:1064px;top:170px;width:1px;height:15px;background:#26a269"></div>
<div class="r" style="left:1073px;top:170px;width:1px;height:15px;background:#26a269"></div>
<div class="r" style="left:1082px;top:170px;width:1px;height:15px;background:#26a269"></div>
<div class="r" style="left:1091px;top:170px;width:1px;height:15px;background:#26a269"></div>
<div class="r" style="left:1100px;top:170px;width:1px;height:15px;background:#26a269"></div>
<div class="r" style="left:1109px;top:170px;width:1px;height:15px;background:#26a269"></div>
<div class="r" style="left:1118px;top:170px;width:1px;height:15px;background:#26a269"></div>
<div class="r" style="left:1127px;top:170px;width:1px;height:15px;background:#26a269"></div>
<div class="r" style="left:1136px;top:170px;width:1px;height:15px;background:#26a269"></div>
<div class="r" style="left:1145px;top:170px;width:1px;height:15px;background:#26a269"></div>
<div class="r" style="left:1154px;top:170px;width:1px;height:15px;background:#26a269"></div>
<div class="r" style="left:1163px;top:170px;width:1px;height:15px;background:#26a269"></div>
<div class="r" style="left:1172px;top:170px;width:1px;height:15px;background:#26a269"></div>
<div class="r" style="left:1181px;top:170px;width:1px;height:15px;background:#26a269"></div>
<div class="r" style="left:1190px;top:170px;width:1px;height:15px;background:#26a269"></div>
<div class="r" style="left:1199px;top:170px;width:1px;height:15px;background:#26a269"></div>
<div class="r" style="left:1208px;top:170px;width:1px;height:15px;background:#26a269"></div>
<div class="r" style="left:1217px;top:170px;width:1px;height:15px;background:#26a269"></div>
<div class="r" style="left:1226px;top:170px;width:1px;height:15px;background:#26a269"></div>
<div class="r" style="left:1235px;top:170px;width:1px;height:15px;background:#26a269"></div>
<div class="r" style="left:1244px;top:170px;width:1px;height:15px;background:#26a269"></div>
<div class="r" style="left:1253px;top:170px;width:1px;height:15px;background:#26a269"></div>
<div class="r" style="left:1262px;top:170px;width:1px;height:15px;background:#26a269"></div>
<div class="r" style="left:1271px;top:170px;width:1px;height:15px;background:#26a269"></div>
<div class="r" style="left:1280px;top:170px;width:1px;height:15px;background:#26a269"></div>
<div class="r" style="left:1289px;top:170px;width:1px;height:15px;background:#a347ba"></div>
<div class="r" style="left:1298px;top:170px;width:1px;height:15px;background:#a347ba"></div>
<div class="r" style="left:1307px;top:170px;width:1px;height:15px;background:#2a5fb0"></div>
<div class="r" style="left:1019px;top:188px;width:1px;height:15px;background:#c01c28"></div>
<div class="r" style="left:1028px;top:188px;width:1px;height:15px;background:#b5835a"></div>
<div class="r" style="left:979px;top:240px;width:54px;height:18px;background:#2ba866"></div>
<div class="r" style="left:1042px;top:240px;width:45px;height:18px;background:#1858a8"></div>
<div class="r" style="left:961px;top:258px;width:936px;height:18px;background:#2ba866"></div>
<div class="r" style="left:961px;top:276px;width:936px;height:18px;background:#2eacc6"></div>
<div class="r" style="left:983px;top:294px;width:1px;height:756px;background:#2aa1b3"></div>
<div class="r" style="left:983px;top:303px;width:14px;height:1px;background:#2aa1b3"></div>
<div class="r" style="left:1010px;top:312px;width:1px;height:738px;background:#2aa1b3"></div>
<div class="r" style="left:1010px;top:321px;width:14px;height:1px;background:#2aa1b3"></div>
<div class="r" style="left:1010px;top:339px;width:14px;height:1px;background:#2aa1b3"></div>
<div class="r" style="left:1010px;top:357px;width:14px;height:1px;background:#2aa1b3"></div>
<div class="r" style="left:1037px;top:366px;width:1px;height:10px;background:#2aa1b3"></div>
<div class="r" style="left:1037px;top:375px;width:14px;height:1px;background:#2aa1b3"></div>
<div class="r" style="left:1064px;top:384px;width:1px;height:666px;background:#2aa1b3"></div>
<div class="r" style="left:1064px;top:393px;width:14px;height:1px;background:#2aa1b3"></div>
<div class="r" style="left:1064px;top:411px;width:14px;height:1px;background:#2aa1b3"></div>
<div class="r" style="left:1064px;top:429px;width:14px;height:1px;background:#2aa1b3"></div>
<div class="r" style="left:1064px;top:447px;width:14px;height:1px;background:#2aa1b3"></div>
<div class="r" style="left:1064px;top:465px;width:14px;height:1px;background:#2aa1b3"></div>
<div class="r" style="left:1064px;top:483px;width:14px;height:1px;background:#2aa1b3"></div>
<div class="r" style="left:1064px;top:501px;width:14px;height:1px;background:#2aa1b3"></div>
<div class="r" style="left:1064px;top:519px;width:14px;height:1px;background:#2aa1b3"></div>
<div class="r" style="left:1064px;top:537px;width:14px;height:1px;background:#2aa1b3"></div>
<div class="r" style="left:1064px;top:555px;width:14px;height:1px;background:#2aa1b3"></div>
<div class="r" style="left:1064px;top:573px;width:14px;height:1px;background:#2aa1b3"></div>
<div class="r" style="left:1064px;top:591px;width:14px;height:1px;background:#2aa1b3"></div>
<div class="r" style="left:1064px;top:645px;width:14px;height:1px;background:#2aa1b3"></div>
<div class="r" style="left:1064px;top:663px;width:14px;height:1px;background:#2aa1b3"></div>
<div class="r" style="left:1064px;top:681px;width:14px;height:1px;background:#2aa1b3"></div>
<div class="r" style="left:1064px;top:699px;width:14px;height:1px;background:#2aa1b3"></div>
<div class="r" style="left:1064px;top:717px;width:14px;height:1px;background:#2aa1b3"></div>
<div class="r" style="left:1064px;top:735px;width:14px;height:1px;background:#2aa1b3"></div>
<div class="r" style="left:1064px;top:753px;width:14px;height:1px;background:#2aa1b3"></div>
<div class="r" style="left:1064px;top:771px;width:14px;height:1px;background:#2aa1b3"></div>
<div class="r" style="left:1064px;top:789px;width:14px;height:1px;background:#2aa1b3"></div>
<div class="r" style="left:1064px;top:807px;width:14px;height:1px;background:#2aa1b3"></div>
<div class="r" style="left:1064px;top:825px;width:14px;height:1px;background:#2aa1b3"></div>
<div class="r" style="left:1064px;top:843px;width:14px;height:1px;background:#2aa1b3"></div>
<div class="r" style="left:1064px;top:861px;width:14px;height:1px;background:#2aa1b3"></div>
<div class="r" style="left:1064px;top:879px;width:14px;height:1px;background:#2aa1b3"></div>
<div class="r" style="left:1064px;top:897px;width:14px;height:1px;background:#2aa1b3"></div>
<div class="r" style="left:1064px;top:915px;width:14px;height:1px;background:#2aa1b3"></div>
<div class="r" style="left:1064px;top:933px;width:14px;height:1px;background:#2aa1b3"></div>
<div class="r" style="left:1064px;top:951px;width:14px;height:1px;background:#2aa1b3"></div>
<div class="r" style="left:1064px;top:969px;width:14px;height:1px;background:#2aa1b3"></div>
<div class="r" style="left:1064px;top:987px;width:14px;height:1px;background:#2aa1b3"></div>
<div class="r" style="left:1064px;top:1005px;width:14px;height:1px;background:#2aa1b3"></div>
<div class="r" style="left:1064px;top:1023px;width:14px;height:1px;background:#2aa1b3"></div>
<div class="r" style="left:1064px;top:1041px;width:14px;height:1px;background:#2aa1b3"></div>
<div class="r" style="left:1091px;top:600px;width:1px;height:28px;background:#23819b"></div>
<div class="r" style="left:1091px;top:609px;width:14px;height:1px;background:#23819b"></div>
<div class="r" style="left:1091px;top:627px;width:14px;height:1px;background:#23819b"></div>
<div class="r" style="left:979px;top:1050px;width:54px;height:18px;background:#2eacc6"></div>
<div class="r" style="left:1051px;top:1050px;width:54px;height:18px;background:#2eacc6"></div>
<div class="r" style="left:1123px;top:1050px;width:54px;height:18px;background:#2eacc6"></div>
<div class="r" style="left:1195px;top:1050px;width:54px;height:18px;background:#2eacc6"></div>
<div class="r" style="left:1267px;top:1050px;width:54px;height:18px;background:#2eacc6"></div>
<div class="r" style="left:1339px;top:1050px;width:54px;height:18px;background:#2eacc6"></div>
<div class="r" style="left:1411px;top:1050px;width:54px;height:18px;background:#2eacc6"></div>
<div class="r" style="left:1483px;top:1050px;width:54px;height:18px;background:#2eacc6"></div>
<div class="r" style="left:1555px;top:1050px;width:54px;height:18px;background:#2eacc6"></div>
<div class="r" style="left:1636px;top:1050px;width:261px;height:18px;background:#2eacc6"></div>
<div class="t" style="left:997px;top:96px;color:#2aa1b3;">0</div>
<div class="t" style="left:1006px;top:96px;color:#ffffff;font-weight:bold;">[</div>
<div class="t" style="left:1375px;top:96px;color:#6e6c74;font-weight:bold;">3.9%</div>
<div class="t" style="left:1411px;top:96px;color:#ffffff;font-weight:bold;">]</div>
<div class="t" style="left:997px;top:114px;color:#2aa1b3;">1</div>
<div class="t" style="left:1006px;top:114px;color:#ffffff;font-weight:bold;">[</div>
<div class="t" style="left:1375px;top:114px;color:#6e6c74;font-weight:bold;">5.8%</div>
<div class="t" style="left:1411px;top:114px;color:#ffffff;font-weight:bold;">]</div>
<div class="t" style="left:997px;top:132px;color:#2aa1b3;">2</div>
<div class="t" style="left:1006px;top:132px;color:#ffffff;font-weight:bold;">[</div>
<div class="t" style="left:1375px;top:132px;color:#6e6c74;font-weight:bold;">0.0%</div>
<div class="t" style="left:1411px;top:132px;color:#ffffff;font-weight:bold;">]</div>
<div class="t" style="left:997px;top:150px;color:#2aa1b3;">3</div>
<div class="t" style="left:1006px;top:150px;color:#ffffff;font-weight:bold;">[</div>
<div class="t" style="left:1375px;top:150px;color:#6e6c74;font-weight:bold;">1.9%</div>
<div class="t" style="left:1411px;top:150px;color:#ffffff;font-weight:bold;">]</div>
<div class="t" style="left:1447px;top:96px;color:#2aa1b3;">4</div>
<div class="t" style="left:1456px;top:96px;color:#ffffff;font-weight:bold;">[</div>
<div class="t" style="left:1834px;top:96px;color:#6e6c74;font-weight:bold;">0.7%</div>
<div class="t" style="left:1870px;top:96px;color:#ffffff;font-weight:bold;">]</div>
<div class="t" style="left:1447px;top:114px;color:#2aa1b3;">5</div>
<div class="t" style="left:1456px;top:114px;color:#ffffff;font-weight:bold;">[</div>
<div class="t" style="left:1834px;top:114px;color:#6e6c74;font-weight:bold;">2.5%</div>
<div class="t" style="left:1870px;top:114px;color:#ffffff;font-weight:bold;">]</div>
<div class="t" style="left:1447px;top:132px;color:#2aa1b3;">6</div>
<div class="t" style="left:1456px;top:132px;color:#ffffff;font-weight:bold;">[</div>
<div class="t" style="left:1834px;top:132px;color:#6e6c74;font-weight:bold;">3.8%</div>
<div class="t" style="left:1870px;top:132px;color:#ffffff;font-weight:bold;">]</div>
<div class="t" style="left:1447px;top:150px;color:#2aa1b3;">7</div>
<div class="t" style="left:1456px;top:150px;color:#ffffff;font-weight:bold;">[</div>
<div class="t" style="left:1834px;top:150px;color:#6e6c74;font-weight:bold;">1.3%</div>
<div class="t" style="left:1870px;top:150px;color:#ffffff;font-weight:bold;">]</div>
<div class="t" style="left:979px;top:168px;color:#2aa1b3;">Mem</div>
<div class="t" style="left:1006px;top:168px;color:#ffffff;font-weight:bold;">[</div>
<div class="t" style="left:1312px;top:168px;color:#a2734c;">5.51G/7.76G</div>
<div class="t" style="left:1411px;top:168px;color:#ffffff;font-weight:bold;">]</div>
<div class="t" style="left:979px;top:186px;color:#2aa1b3;">Swp</div>
<div class="t" style="left:1006px;top:186px;color:#ffffff;font-weight:bold;">[</div>
<div class="t" style="left:1312px;top:186px;color:#6e6c74;font-weight:bold;">96.5M/7.45G</div>
<div class="t" style="left:1411px;top:186px;color:#ffffff;font-weight:bold;">]</div>
<div class="t" style="left:1429px;top:168px;color:#2aa1b3;">Tasks: </div>
<div class="t" style="left:1492px;top:168px;color:#34b9d1;font-weight:bold;">160</div>
<div class="t" style="left:1519px;top:168px;color:#2aa1b3;">, </div>
<div class="t" style="left:1537px;top:168px;color:#2fb374;font-weight:bold;">1102</div>
<div class="t" style="left:1573px;top:168px;color:#2aa1b3;"> thr, </div>
<div class="t" style="left:1627px;top:168px;color:#6e6c74;font-weight:bold;">146</div>
<div class="t" style="left:1654px;top:168px;color:#2aa1b3;"> kthr; </div>
<div class="t" style="left:1717px;top:168px;color:#2fb374;font-weight:bold;">1</div>
<div class="t" style="left:1726px;top:168px;color:#2aa1b3;"> running</div>
<div class="t" style="left:1429px;top:186px;color:#2aa1b3;">Load average: </div>
<div class="t" style="left:1555px;top:186px;color:#ffffff;font-weight:bold;">1.11</div>
<div class="t" style="left:1600px;top:186px;color:#34b9d1;font-weight:bold;">0.96</div>
<div class="t" style="left:1645px;top:186px;color:#2aa1b3;">0.90</div>
<div class="t" style="left:1429px;top:204px;color:#2aa1b3;">Uptime: </div>
<div class="t" style="left:1501px;top:204px;color:#34b9d1;font-weight:bold;">02:55:41</div>
<div class="t" style="left:988px;top:240px;color:#0f4a2c;">Main</div>
<div class="t" style="left:1051px;top:240px;color:#0c3573;">I/O</div>
<div class="t" style="left:979px;top:258px;color:#0f4a2c;">Command</div>
<div class="t" style="left:961px;top:276px;color:#0a3a63;">6 /sbin/init</div>
<div class="t" style="left:961px;top:294px;color:#e4e4e4;">7</div>
<div class="t" style="left:1006px;top:294px;color:#e4e4e4;">/usr/lib/systemd/systemd --user</div>
<div class="t" style="left:961px;top:312px;color:#6e6c74;font-weight:bold;">0</div>
<div class="t" style="left:1033px;top:312px;color:#e4e4e4;">/home/silerra/.steam/debian-installation/ubuntu12_32/steam-runtime/usr/libexec/steam-runtime-too</div>
<div class="t" style="left:961px;top:330px;color:#6e6c74;font-weight:bold;">0</div>
<div class="t" style="left:1033px;top:330px;color:#e4e4e4;">/home/silerra/.steam/debian-installation/ubuntu12_32/steam-runtime/usr/libexec/steam-runtime-too</div>
<div class="t" style="left:961px;top:348px;color:#e4e4e4;">4</div>
<div class="t" style="left:1033px;top:348px;color:#e4e4e4;">bash /usr/bin/steam steam://blub</div>
<div class="t" style="left:961px;top:366px;color:#e4e4e4;">1</div>
<div class="t" style="left:1060px;top:366px;color:#e4e4e4;">/home/silerra/.steam/debian-installation/ubuntu12_32/steam -srt-logger-opened steam://blub</div>
<div class="t" style="left:961px;top:384px;color:#e4e4e4;">2</div>
<div class="t" style="left:1087px;top:384px;color:#26a269;">/home/silerra/.steam/debian-installation/ubuntu12_32/steam -srt-logger-opened steam://blub</div>
<div class="t" style="left:961px;top:402px;color:#e4e4e4;">1</div>
<div class="t" style="left:1087px;top:402px;color:#26a269;">/home/silerra/.steam/debian-installation/ubuntu12_32/steam -srt-logger-opened steam://blub</div>
<div class="t" style="left:961px;top:420px;color:#e4e4e4;">4</div>
<div class="t" style="left:1087px;top:420px;color:#26a269;">/home/silerra/.steam/debian-installation/ubuntu12_32/steam -srt-logger-opened steam://blub</div>
<div class="t" style="left:961px;top:438px;color:#e4e4e4;">4</div>
<div class="t" style="left:1087px;top:438px;color:#26a269;">/home/silerra/.steam/debian-installation/ubuntu12_32/steam -srt-logger-opened steam://blub</div>
<div class="t" style="left:961px;top:456px;color:#e4e4e4;">0</div>
<div class="t" style="left:1087px;top:456px;color:#26a269;">/home/silerra/.steam/debian-installation/ubuntu12_32/steam -srt-logger-opened steam://blub</div>
<div class="t" style="left:961px;top:474px;color:#e4e4e4;">4</div>
<div class="t" style="left:1087px;top:474px;color:#26a269;">/home/silerra/.steam/debian-installation/ubuntu12_32/steam -srt-logger-opened steam://blub</div>
<div class="t" style="left:961px;top:492px;color:#6e6c74;font-weight:bold;">0</div>
<div class="t" style="left:1087px;top:492px;color:#26a269;">/home/silerra/.steam/debian-installation/ubuntu12_32/steam -srt-logger-opened steam://blub</div>
<div class="t" style="left:961px;top:510px;color:#e4e4e4;">5</div>
<div class="t" style="left:1087px;top:510px;color:#26a269;">/home/silerra/.steam/debian-installation/ubuntu12_32/steam -srt-logger-opened steam://blub</div>
<div class="t" style="left:961px;top:528px;color:#e4e4e4;">2</div>
<div class="t" style="left:1087px;top:528px;color:#26a269;">/home/silerra/.steam/debian-installation/ubuntu12_32/steam -srt-logger-opened steam://blub</div>
<div class="t" style="left:961px;top:546px;color:#e4e4e4;">4</div>
<div class="t" style="left:1087px;top:546px;color:#26a269;">/home/silerra/.steam/debian-installation/ubuntu12_32/steam -srt-logger-opened steam://blub</div>
<div class="t" style="left:961px;top:564px;color:#e4e4e4;">4</div>
<div class="t" style="left:1087px;top:564px;color:#26a269;">/home/silerra/.steam/debian-installation/ubuntu12_32/steam -srt-logger-opened steam://blub</div>
<div class="t" style="left:961px;top:582px;color:#6e6c74;font-weight:bold;">0</div>
<div class="t" style="left:1087px;top:582px;color:#e4e4e4;">steam-runtime-launcher-service --alongside-steam</div>
<div class="t" style="left:961px;top:600px;color:#e4e4e4;">1</div>
<div class="t" style="left:1114px;top:600px;color:#26a269;">steam-runtime-launcher-service --alongside-steam</div>
<div class="t" style="left:961px;top:618px;color:#6e6c74;font-weight:bold;">0</div>
<div class="t" style="left:1114px;top:618px;color:#26a269;">steam-runtime-launcher-service --alongside-steam</div>
<div class="t" style="left:961px;top:636px;color:#6e6c74;font-weight:bold;">0</div>
<div class="t" style="left:1087px;top:636px;color:#26a269;">/home/silerra/.steam/debian-installation/ubuntu12_32/steam -srt-logger-opened steam://blub</div>
<div class="t" style="left:961px;top:654px;color:#6e6c74;font-weight:bold;">0</div>
<div class="t" style="left:1087px;top:654px;color:#26a269;">/home/silerra/.steam/debian-installation/ubuntu12_32/steam -srt-logger-opened steam://blub</div>
<div class="t" style="left:961px;top:672px;color:#e4e4e4;">5</div>
<div class="t" style="left:1087px;top:672px;color:#26a269;">/home/silerra/.steam/debian-installation/ubuntu12_32/steam -srt-logger-opened steam://blub</div>
<div class="t" style="left:961px;top:690px;color:#e4e4e4;">3</div>
<div class="t" style="left:1087px;top:690px;color:#26a269;">/home/silerra/.steam/debian-installation/ubuntu12_32/steam -srt-logger-opened steam://blub</div>
<div class="t" style="left:961px;top:708px;color:#e4e4e4;">7</div>
<div class="t" style="left:1087px;top:708px;color:#26a269;">/home/silerra/.steam/debian-installation/ubuntu12_32/steam -srt-logger-opened steam://blub</div>
<div class="t" style="left:961px;top:726px;color:#e4e4e4;">1</div>
<div class="t" style="left:1087px;top:726px;color:#26a269;">/home/silerra/.steam/debian-installation/ubuntu12_32/steam -srt-logger-opened steam://blub</div>
<div class="t" style="left:961px;top:744px;color:#6e6c74;font-weight:bold;">0</div>
<div class="t" style="left:1087px;top:744px;color:#26a269;">/home/silerra/.steam/debian-installation/ubuntu12_32/steam -srt-logger-opened steam://blub</div>
<div class="t" style="left:961px;top:762px;color:#e4e4e4;">1</div>
<div class="t" style="left:1087px;top:762px;color:#26a269;">/home/silerra/.steam/debian-installation/ubuntu12_32/steam -srt-logger-opened steam://blub</div>
<div class="t" style="left:961px;top:780px;color:#6e6c74;font-weight:bold;">0</div>
<div class="t" style="left:1087px;top:780px;color:#26a269;">/home/silerra/.steam/debian-installation/ubuntu12_32/steam -srt-logger-opened steam://blub</div>
<div class="t" style="left:961px;top:798px;color:#6e6c74;font-weight:bold;">0</div>
<div class="t" style="left:1087px;top:798px;color:#26a269;">/home/silerra/.steam/debian-installation/ubuntu12_32/steam -srt-logger-opened steam://blub</div>
<div class="t" style="left:961px;top:816px;color:#e4e4e4;">4</div>
<div class="t" style="left:1087px;top:816px;color:#26a269;">/home/silerra/.steam/debian-installation/ubuntu12_32/steam -srt-logger-opened steam://blub</div>
<div class="t" style="left:961px;top:834px;color:#6e6c74;font-weight:bold;">0</div>
<div class="t" style="left:1087px;top:834px;color:#26a269;">/home/silerra/.steam/debian-installation/ubuntu12_32/steam -srt-logger-opened steam://blub</div>
<div class="t" style="left:961px;top:852px;color:#e4e4e4;">4</div>
<div class="t" style="left:1087px;top:852px;color:#26a269;">/home/silerra/.steam/debian-installation/ubuntu12_32/steam -srt-logger-opened steam://blub</div>
<div class="t" style="left:961px;top:870px;color:#e4e4e4;">3</div>
<div class="t" style="left:1087px;top:870px;color:#26a269;">/home/silerra/.steam/debian-installation/ubuntu12_32/steam -srt-logger-opened steam://blub</div>
<div class="t" style="left:961px;top:888px;color:#6e6c74;font-weight:bold;">0</div>
<div class="t" style="left:1087px;top:888px;color:#26a269;">/home/silerra/.steam/debian-installation/ubuntu12_32/steam -srt-logger-opened steam://blub</div>
<div class="t" style="left:961px;top:906px;color:#e4e4e4;">2</div>
<div class="t" style="left:1087px;top:906px;color:#26a269;">/home/silerra/.steam/debian-installation/ubuntu12_32/steam -srt-logger-opened steam://blub</div>
<div class="t" style="left:961px;top:924px;color:#e4e4e4;">5</div>
<div class="t" style="left:1087px;top:924px;color:#26a269;">/home/silerra/.steam/debian-installation/ubuntu12_32/steam -srt-logger-opened steam://blub</div>
<div class="t" style="left:961px;top:942px;color:#e4e4e4;">2</div>
<div class="t" style="left:1087px;top:942px;color:#26a269;">/home/silerra/.steam/debian-installation/ubuntu12_32/steam -srt-logger-opened steam://blub</div>
<div class="t" style="left:961px;top:960px;color:#e4e4e4;">4</div>
<div class="t" style="left:1087px;top:960px;color:#26a269;">/home/silerra/.steam/debian-installation/ubuntu12_32/steam -srt-logger-opened steam://blub</div>
<div class="t" style="left:961px;top:978px;color:#6e6c74;font-weight:bold;">0</div>
<div class="t" style="left:1087px;top:978px;color:#26a269;">/home/silerra/.steam/debian-installation/ubuntu12_32/steam -srt-logger-opened steam://blub</div>
<div class="t" style="left:961px;top:996px;color:#6e6c74;font-weight:bold;">0</div>
<div class="t" style="left:1087px;top:996px;color:#26a269;">/home/silerra/.steam/debian-installation/ubuntu12_32/steam -srt-logger-opened steam://blub</div>
<div class="t" style="left:961px;top:1014px;color:#e4e4e4;">1</div>
<div class="t" style="left:1087px;top:1014px;color:#26a269;">/home/silerra/.steam/debian-installation/ubuntu12_32/steam -srt-logger-opened steam://blub</div>
<div class="t" style="left:961px;top:1032px;color:#e4e4e4;">0</div>
<div class="t" style="left:1087px;top:1032px;color:#e4e4e4;">/home/silerra/.steam/debian-installation/steamrt64/pv-runtime/steam-runtime-steamrt/pressu</div>
<div class="t" style="left:961px;top:1050px;color:#ffffff;">F1</div>
<div class="t" style="left:979px;top:1050px;color:#0a3a63;">Help  </div>
<div class="t" style="left:1033px;top:1050px;color:#ffffff;">F2</div>
<div class="t" style="left:1051px;top:1050px;color:#0a3a63;">Setup </div>
<div class="t" style="left:1105px;top:1050px;color:#ffffff;">F3</div>
<div class="t" style="left:1123px;top:1050px;color:#0a3a63;">Search</div>
<div class="t" style="left:1177px;top:1050px;color:#ffffff;">F4</div>
<div class="t" style="left:1195px;top:1050px;color:#0a3a63;">Filter</div>
<div class="t" style="left:1249px;top:1050px;color:#ffffff;">F5</div>
<div class="t" style="left:1267px;top:1050px;color:#0a3a63;">List  </div>
<div class="t" style="left:1321px;top:1050px;color:#ffffff;">F6</div>
<div class="t" style="left:1339px;top:1050px;color:#0a3a63;">SortBy</div>
<div class="t" style="left:1393px;top:1050px;color:#ffffff;">F7</div>
<div class="t" style="left:1411px;top:1050px;color:#0a3a63;">Nice -</div>
<div class="t" style="left:1465px;top:1050px;color:#ffffff;">F8</div>
<div class="t" style="left:1483px;top:1050px;color:#0a3a63;">Nice +</div>
<div class="t" style="left:1537px;top:1050px;color:#ffffff;">F9</div>
<div class="t" style="left:1555px;top:1050px;color:#0a3a63;">Kill  </div>
<div class="t" style="left:1609px;top:1050px;color:#ffffff;">F10</div>
<div class="t" style="left:1636px;top:1050px;color:#0a3a63;">Quit</div>
</div>
</div>
</body></html>
